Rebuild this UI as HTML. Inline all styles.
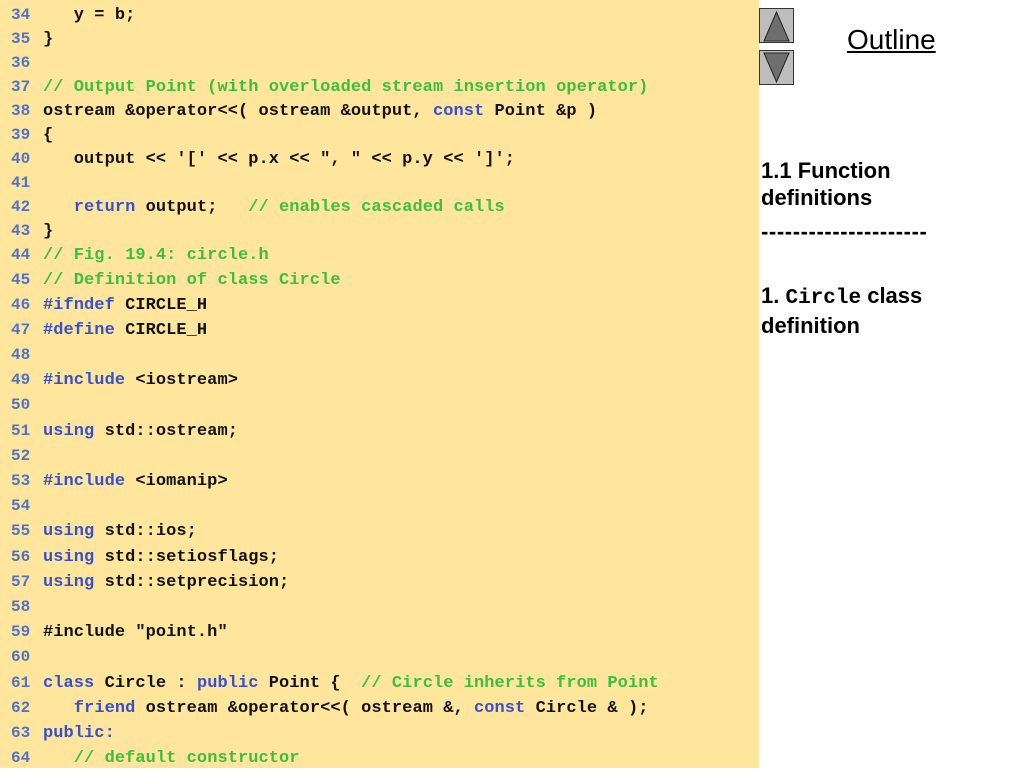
<!DOCTYPE html>
<html><head><meta charset="utf-8"><style>
body{margin:0;width:1024px;height:768px;background:#fff;position:relative;overflow:hidden;font-family:"Liberation Sans",sans-serif}
#code{position:absolute;left:0;top:0;width:759px;height:768px;background:#ffe69c}
.l{position:absolute;left:0;height:20px;line-height:20px;font:bold 17px "Liberation Mono",monospace;white-space:pre;color:#111;letter-spacing:0.06px;margin-top:2px}
.n{position:absolute;left:11px;color:#5073c8;font-size:16px}
.c{position:absolute;left:43px}
.k{color:#3650d0}.g{color:#3cbf3c}
.btn{position:absolute;left:759px;width:35px;height:35px;background:#bdbdbd;border:1px solid #333;box-sizing:border-box}
.side{position:absolute;left:761px;font-weight:bold;font-size:22px;color:#000;line-height:27px}
</style></head><body>
<div id="code">
<div class="l" style="top:4px"><span class="n">34</span><span class="c">   y = b;</span></div>
<div class="l" style="top:28px"><span class="n">35</span><span class="c">}</span></div>
<div class="l" style="top:52px"><span class="n">36</span></div>
<div class="l" style="top:76px"><span class="n">37</span><span class="c g">// Output Point (with overloaded stream insertion operator)</span></div>
<div class="l" style="top:100px"><span class="n">38</span><span class="c">ostream &amp;operator&lt;&lt;( ostream &amp;output, <span class="k">const</span> Point &amp;p )</span></div>
<div class="l" style="top:124px"><span class="n">39</span><span class="c">{</span></div>
<div class="l" style="top:148px"><span class="n">40</span><span class="c">   output &lt;&lt; '[' &lt;&lt; p.x &lt;&lt; ", " &lt;&lt; p.y &lt;&lt; ']';</span></div>
<div class="l" style="top:172px"><span class="n">41</span></div>
<div class="l" style="top:196px"><span class="n">42</span><span class="c">   <span class="k">return</span> output;   <span class="g">// enables cascaded calls</span></span></div>
<div class="l" style="top:220px"><span class="n">43</span><span class="c">}</span></div>
<div class="l" style="top:244px"><span class="n">44</span><span class="c g">// Fig. 19.4: circle.h</span></div>
<div class="l" style="top:269px"><span class="n">45</span><span class="c g">// Definition of class Circle</span></div>
<div class="l" style="top:294px"><span class="n">46</span><span class="c"><span class="k">#ifndef</span> CIRCLE_H</span></div>
<div class="l" style="top:319px"><span class="n">47</span><span class="c"><span class="k">#define</span> CIRCLE_H</span></div>
<div class="l" style="top:344px"><span class="n">48</span></div>
<div class="l" style="top:369px"><span class="n">49</span><span class="c"><span class="k">#include</span> &lt;iostream&gt;</span></div>
<div class="l" style="top:394px"><span class="n">50</span></div>
<div class="l" style="top:420px"><span class="n">51</span><span class="c"><span class="k">using</span> std::ostream;</span></div>
<div class="l" style="top:445px"><span class="n">52</span></div>
<div class="l" style="top:470px"><span class="n">53</span><span class="c"><span class="k">#include</span> &lt;iomanip&gt;</span></div>
<div class="l" style="top:495px"><span class="n">54</span></div>
<div class="l" style="top:520px"><span class="n">55</span><span class="c"><span class="k">using</span> std::ios;</span></div>
<div class="l" style="top:546px"><span class="n">56</span><span class="c"><span class="k">using</span> std::setiosflags;</span></div>
<div class="l" style="top:571px"><span class="n">57</span><span class="c"><span class="k">using</span> std::setprecision;</span></div>
<div class="l" style="top:596px"><span class="n">58</span></div>
<div class="l" style="top:621px"><span class="n">59</span><span class="c">#include "point.h"</span></div>
<div class="l" style="top:646px"><span class="n">60</span></div>
<div class="l" style="top:672px"><span class="n">61</span><span class="c"><span class="k">class</span> Circle : <span class="k">public</span> Point {  <span class="g">// Circle inherits from Point</span></span></div>
<div class="l" style="top:697px"><span class="n">62</span><span class="c">   <span class="k">friend</span> ostream &amp;operator&lt;&lt;( ostream &amp;, <span class="k">const</span> Circle &amp; );</span></div>
<div class="l" style="top:722px"><span class="n">63</span><span class="c k">public:</span></div>
<div class="l" style="top:747px"><span class="n">64</span><span class="c">   <span class="g">// default constructor</span></span></div>
</div>
<div class="btn" style="top:8px"><svg width="33" height="33" style="display:block"><polygon points="16.5,3 4,32 29,32" fill="#6e6e6e" stroke="#222" stroke-width="1"/></svg></div>
<div class="btn" style="top:50px"><svg width="33" height="33" style="display:block"><polygon points="4,2 29,2 16.5,31" fill="#6e6e6e" stroke="#222" stroke-width="1"/></svg></div>
<div style="position:absolute;left:847px;top:24px;font-size:28px;text-decoration:underline;color:#000;line-height:32px">Outline</div>
<div class="side" style="top:157px">1.1 Function<br>definitions</div>
<div class="side" style="top:218px;letter-spacing:0.6px">---------------------</div>
<div class="side" style="top:282px">1. <span style="font-family:'Liberation Mono',monospace;font-size:21px">Circle</span> class<br>definition</div>
</body></html>
